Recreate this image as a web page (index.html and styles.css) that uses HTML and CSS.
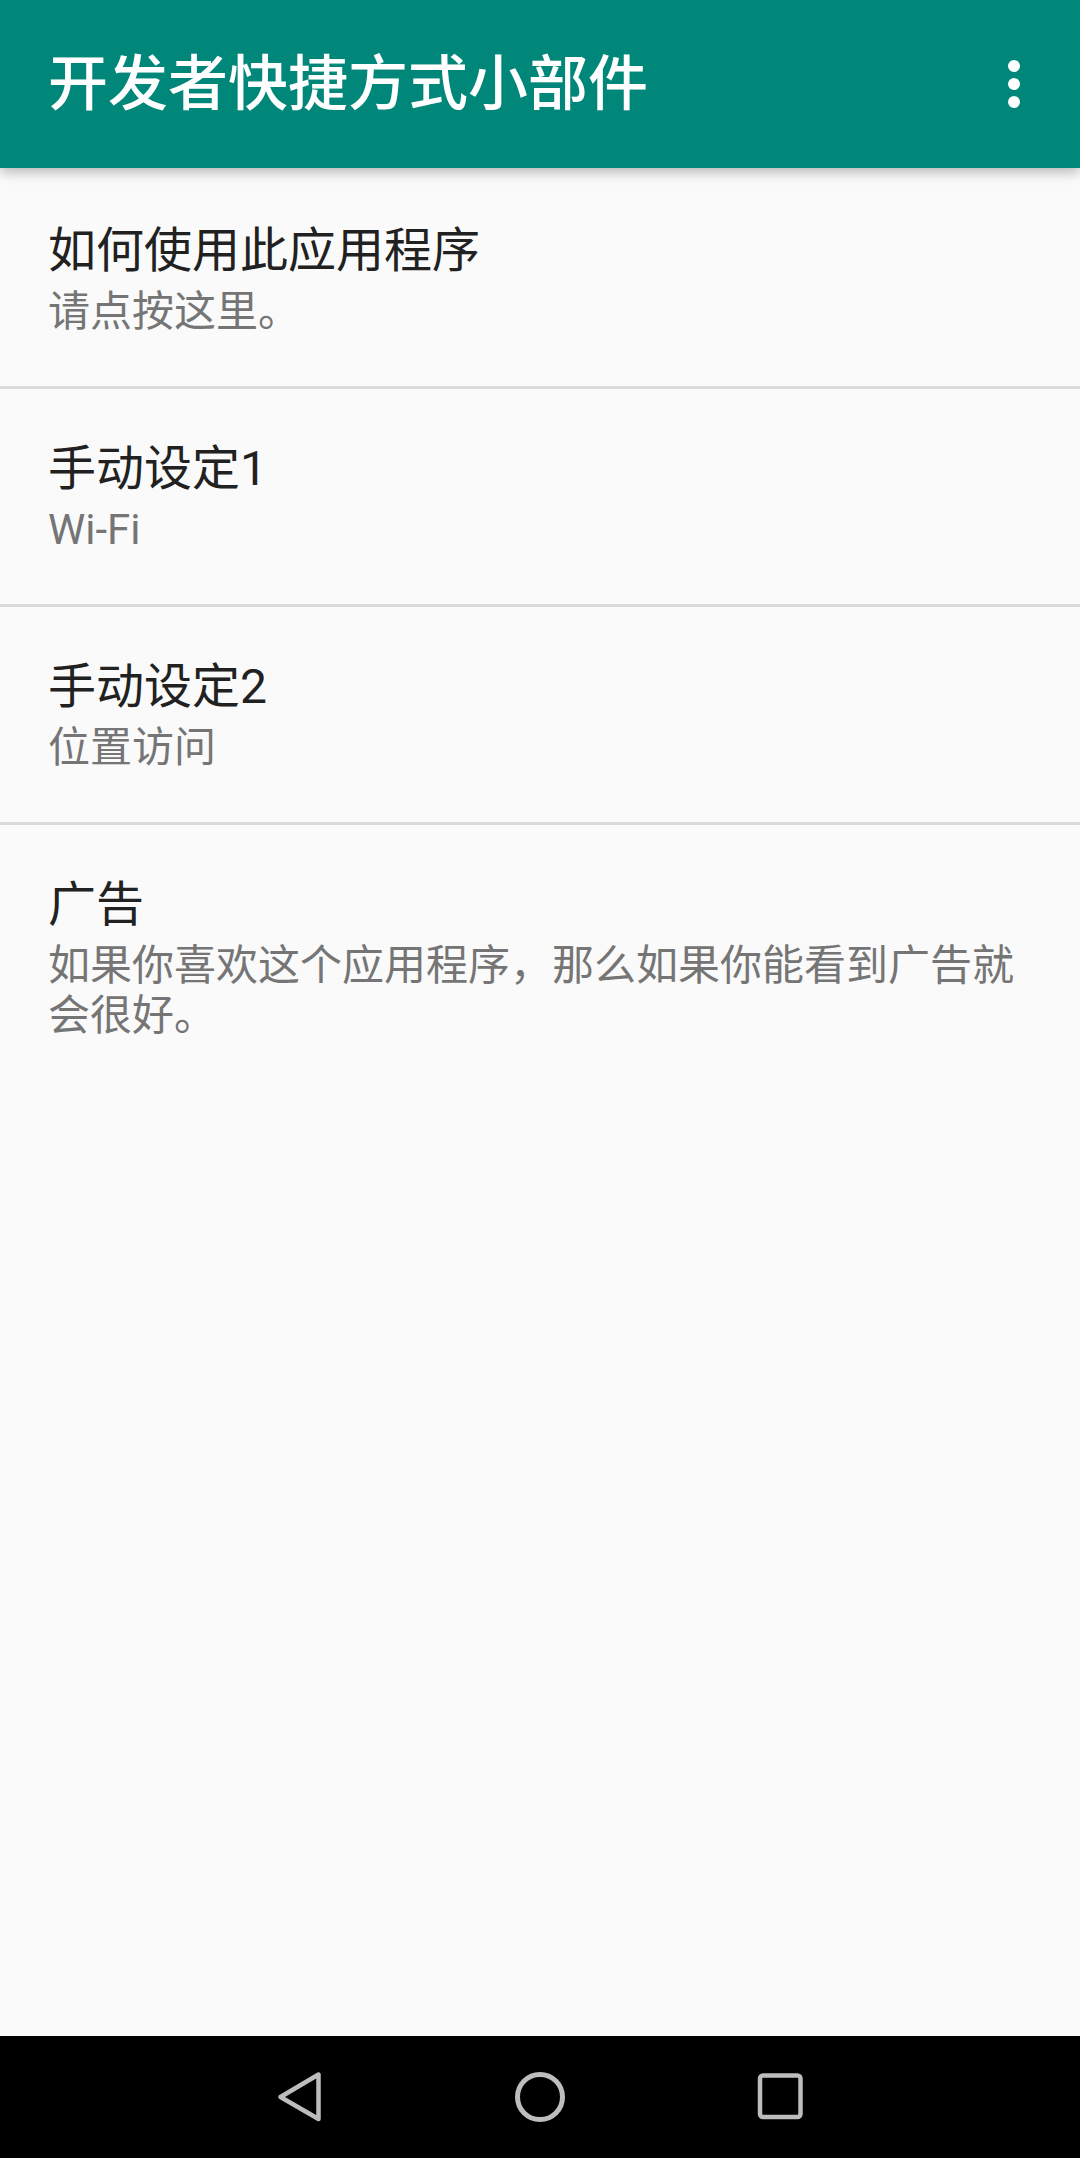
FILE: index.html
```html
<html>
<head>
  <meta charset="utf-8">
  <link rel="stylesheet" href="styles.css">
</head>
<body>
<div class="screen">
  <div class="toolbar">
    <span class="toolbar-title">开发者快捷方式小部件</span>
    <div class="overflow">
      <span class="dot"></span>
      <span class="dot"></span>
      <span class="dot"></span>
    </div>
  </div>

  <div class="prefs">
    <div class="pref">
      <div class="pref-title">如何使用此应用程序</div>
      <div class="pref-summary">请点按这里。</div>
    </div>
    <div class="pref">
      <div class="pref-title">手动设定1</div>
      <div class="pref-summary">Wi-Fi</div>
    </div>
    <div class="pref">
      <div class="pref-title">手动设定2</div>
      <div class="pref-summary">位置访问</div>
    </div>
    <div class="pref last">
      <div class="pref-title">广告</div>
      <div class="pref-summary">如果你喜欢这个应用程序，那么如果你能看到广告就会很好。</div>
    </div>
  </div>

  <div class="navbar">
    <svg class="nav-icon" width="60" height="60" viewBox="0 0 60 60">
      <path d="M48.5 7.5 L48.5 52 L10.5 30 Z" fill="none" stroke="#bdbdbd" stroke-width="4.5" stroke-linejoin="round"/>
    </svg>
    <svg class="nav-icon" width="60" height="60" viewBox="0 0 60 60">
      <circle cx="30" cy="30" r="22.5" fill="none" stroke="#bdbdbd" stroke-width="5"/>
    </svg>
    <svg class="nav-icon" width="60" height="60" viewBox="0 0 60 60">
      <rect x="10" y="8.5" width="40.5" height="41.5" rx="3" fill="none" stroke="#bdbdbd" stroke-width="4.5"/>
    </svg>
  </div>
</div>
</body>
</html>
```

FILE: styles.css
```css
html, body {
  margin: 0;
  padding: 0;
}

body {
  font-family: Roboto, "Noto Sans CJK SC", sans-serif;
  background-color: #fafafa;
}

.screen {
  width: 1080px;
  height: 2158px;
  display: flex;
  flex-direction: column;
  overflow: hidden;
}

.toolbar {
  position: relative;
  z-index: 2;
  height: 168px;
  flex-shrink: 0;
  background-color: #00877a;
  display: flex;
  align-items: center;
  padding-left: 48px;
  box-shadow: 0 4px 12px rgba(0, 0, 0, 0.28);
}

.toolbar-title {
  flex: 1;
  color: #ffffff;
  font-size: 60px;
  font-weight: 500;
  line-height: 80px;
  margin-top: 2px;
}

.overflow {
  width: 132px;
  display: flex;
  flex-direction: column;
  align-items: center;
  gap: 6px;
}

.dot {
  width: 12px;
  height: 12px;
  border-radius: 50%;
  background-color: #ffffff;
}

.prefs {
  flex: 1;
  padding-top: 3px;
  background-color: #fafafa;
}

.pref {
  padding: 48px 48px 49px 48px;
  border-bottom: 3px solid #dadada;
}

.pref.last {
  border-bottom: none;
}

.pref-title {
  font-size: 48px;
  line-height: 64px;
  color: #212121;
}

.pref-summary {
  margin-top: 4px;
  font-size: 42px;
  line-height: 50px;
  color: #757575;
}

.navbar {
  height: 122px;
  flex-shrink: 0;
  background-color: #000000;
  display: flex;
  justify-content: center;
  align-items: center;
  gap: 180px;
}

.nav-icon {
  display: block;
}
```
